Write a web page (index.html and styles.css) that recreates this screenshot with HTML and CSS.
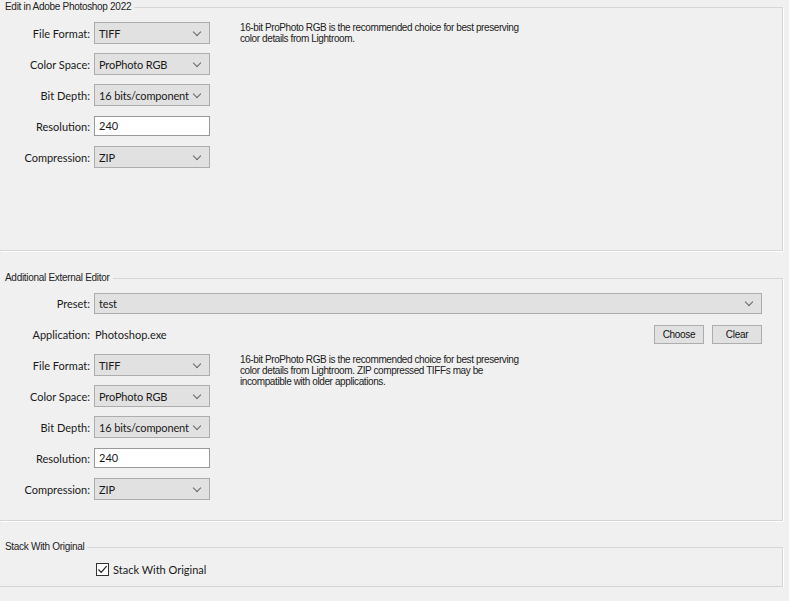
FILE: index.html
```html
<!DOCTYPE html>
<html lang="en">

<head>
    <meta charset="UTF-8">
    <meta name="viewport" content="width=device-width, initial-scale=1.0">
    <title>External Editing</title>
    <link rel="stylesheet" href="styles.css">
</head>

<body>
    <!-- Edit in Photoshop -->
    <fieldset class="group">
        <legend>Edit in Adobe Photoshop 2022</legend>
        <div class="group-body body-ps">
            <div class="form-grid">
                <label class="lbl">File Format:</label>
                <div class="select"><span>TIFF</span><i class="chev"></i></div>
                <p class="note">16-bit ProPhoto RGB is the recommended choice for best preserving<br>color details from Lightroom.</p>

                <label class="lbl">Color Space:</label>
                <div class="select"><span>ProPhoto RGB</span><i class="chev"></i></div>

                <label class="lbl">Bit Depth:</label>
                <div class="select"><span>16 bits/component</span><i class="chev"></i></div>

                <label class="lbl">Resolution:</label>
                <div class="input">240</div>

                <label class="lbl">Compression:</label>
                <div class="select"><span>ZIP</span><i class="chev"></i></div>
            </div>
        </div>
    </fieldset>

    <!-- Additional external editor -->
    <fieldset class="group group-ext">
        <legend>Additional External Editor</legend>
        <div class="group-body body-ext">
            <div class="form-grid">
                <label class="lbl">Preset:</label>
                <div class="select wide"><span>test</span><i class="chev"></i></div>

                <label class="lbl">Application:</label>
                <div class="value">Photoshop.exe</div>
                <div class="btns">
                    <button class="btn">Choose</button>
                    <button class="btn">Clear</button>
                </div>

                <label class="lbl">File Format:</label>
                <div class="select"><span>TIFF</span><i class="chev"></i></div>
                <p class="note">16-bit ProPhoto RGB is the recommended choice for best preserving<br>color details from Lightroom. ZIP compressed TIFFs may be<br>incompatible with older applications.</p>

                <label class="lbl">Color Space:</label>
                <div class="select"><span>ProPhoto RGB</span><i class="chev"></i></div>

                <label class="lbl">Bit Depth:</label>
                <div class="select"><span>16 bits/component</span><i class="chev"></i></div>

                <label class="lbl">Resolution:</label>
                <div class="input">240</div>

                <label class="lbl">Compression:</label>
                <div class="select"><span>ZIP</span><i class="chev"></i></div>
            </div>
        </div>
    </fieldset>

    <!-- Stack -->
    <fieldset class="group group-stack">
        <legend>Stack With Original</legend>
        <div class="group-body body-stack">
            <label class="check">
                <span class="box">
                    <svg width="11" height="11" viewBox="0 0 11 11">
                        <polyline points="1.5,5.5 4.2,8.3 9.6,2.2" fill="none" stroke="#222" stroke-width="1.2" />
                    </svg>
                </span>
                Stack With Original
            </label>
        </div>
    </fieldset>
</body>

</html>
```

FILE: styles.css
```css
body {
    margin: 0;
    background: #f0f0f0;
    color: #1a1a1a;
    font-family: "Lato", "Liberation Sans", sans-serif;
    font-size: 11px;
}

/* 分组框 */
.group {
    width: 783px;
    box-sizing: border-box;
    margin: 0;
    padding: 0;
    border: 1px solid #d6d6d6;
    border-left: none;
    box-shadow: 1px 1px 0 #fff;
}

.group legend {
    padding: 0 3px 0 5px;
    font-family: "Liberation Sans", sans-serif;
    font-size: 10px;
    letter-spacing: -0.3px;
    line-height: 14px;
    color: #222;
}

.group-ext {
    margin-top: 20px;
}

.group-stack {
    margin-top: 19px;
}

.group-body {
    box-sizing: border-box;
}

.body-ps {
    height: 236px;
    padding-top: 8px;
}

.body-ext {
    height: 235px;
    padding: 7px 20px 0 0;
}

.body-stack {
    height: 32px;
    padding-top: 9px;
}

/* 表单网格 */
.form-grid {
    display: grid;
    grid-template-columns: 90px 116px 1fr;
    grid-auto-rows: 22px;
    column-gap: 4px;
    row-gap: 9px;
    align-items: center;
}

.lbl {
    grid-column: 1;
    text-align: right;
    white-space: nowrap;
}

.select {
    grid-column: 2;
    height: 22px;
    box-sizing: border-box;
    border: 1px solid #adadad;
    background: #e1e1e1;
    display: flex;
    align-items: center;
    justify-content: space-between;
    padding: 0 9px 0 4px;
    white-space: nowrap;
    letter-spacing: -0.15px;
}

.select.wide {
    grid-column: 2 / 4;
    height: 21px;
}

.chev {
    flex-shrink: 0;
    width: 5px;
    height: 5px;
    border-right: 1px solid #666;
    border-bottom: 1px solid #666;
    transform: rotate(45deg);
    margin-top: -3px;
}

.input {
    grid-column: 2;
    height: 20px;
    box-sizing: border-box;
    border: 1px solid #9a9a9a;
    background: #fff;
    line-height: 18px;
    padding-left: 4px;
}

.value {
    grid-column: 2;
    padding-left: 1px;
}

.btns {
    grid-column: 3;
    justify-self: end;
    display: flex;
    gap: 8px;
}

.btn {
    width: 50px;
    height: 19px;
    padding: 0;
    border: 1px solid #adadad;
    background: #e1e1e1;
    font-family: "Liberation Sans", sans-serif;
    font-size: 10px;
    letter-spacing: -0.3px;
    color: #111;
}

.note {
    grid-column: 3;
    grid-row: span 3;
    align-self: start;
    margin: 0 0 0 26px;
    font-family: "Liberation Sans", sans-serif;
    font-size: 10px;
    letter-spacing: -0.4px;
    line-height: 11px;
    color: #222;
    white-space: nowrap;
}

/* 复选框 */
.check {
    display: flex;
    align-items: center;
    gap: 4px;
    padding-left: 96px;
}

.box {
    width: 13px;
    height: 13px;
    box-sizing: border-box;
    border: 1px solid #333;
    background: #fff;
    display: flex;
    align-items: center;
    justify-content: center;
}
```
